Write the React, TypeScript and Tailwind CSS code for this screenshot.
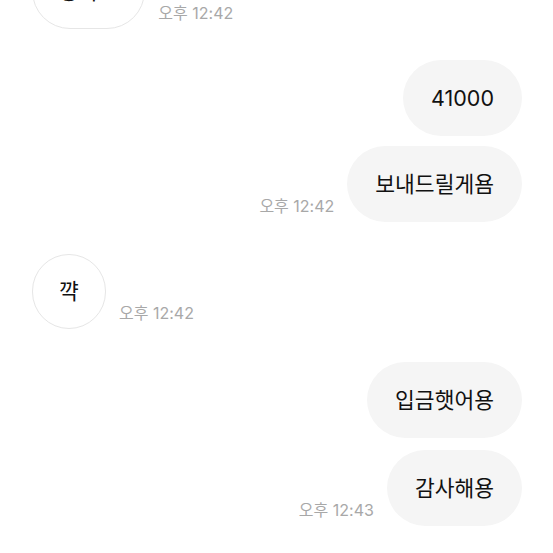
const font = { fontFamily: 'Inter, "Noto Sans CJK KR", sans-serif' };

type Msg = { side: 'left' | 'right'; text: string; time?: string; gap: string; round?: boolean };

const messages: Msg[] = [
  { side: 'left', text: '좋아요', time: '오후 12:42', gap: 'mt-0' },
  { side: 'right', text: '41000', gap: 'mt-[31px]' },
  { side: 'right', text: '보내드릴게욤', time: '오후 12:42', gap: 'mt-[10px]' },
  { side: 'left', text: '꺅', time: '오후 12:42', gap: 'mt-[32px]', round: true },
  { side: 'right', text: '입금햇어용', gap: 'mt-[33px]' },
  { side: 'right', text: '감사해용', time: '오후 12:43', gap: 'mt-[12px]' },
];

function Time({ value }: { value: string }) {
  return <span className="mb-[6px] text-[16px] leading-[20px] text-[#a8a8a8] whitespace-nowrap">{value}</span>;
}

export default function App() {
  return (
    <div className="w-[553px] h-[553px] overflow-hidden bg-white" style={font}>
      <div className="mt-[-47px] pl-[32px] pr-[31px] flex flex-col">
        {messages.map((m, i) => (
          <div
            key={i}
            className={`${m.gap} flex items-end gap-[13px] ${m.side === 'right' ? 'flex-row-reverse' : 'flex-row'}`}
          >
            <div
              className={
                m.side === 'right'
                  ? 'h-[76px] px-[28px] rounded-full bg-[#f5f5f5] flex items-center text-[21.5px] text-[#111111]'
                  : m.round
                  ? 'h-[75px] w-[74px] rounded-full bg-white border border-[#e6e6e6] flex items-center justify-center text-[21.5px] text-[#111111]'
                  : 'h-[76px] px-[26px] rounded-full bg-white border border-[#e6e6e6] flex items-center text-[21.5px] text-[#111111]'
              }
            >
              {m.text}
            </div>
            {m.time && <Time value={m.time} />}
          </div>
        ))}
      </div>
    </div>
  );
}
